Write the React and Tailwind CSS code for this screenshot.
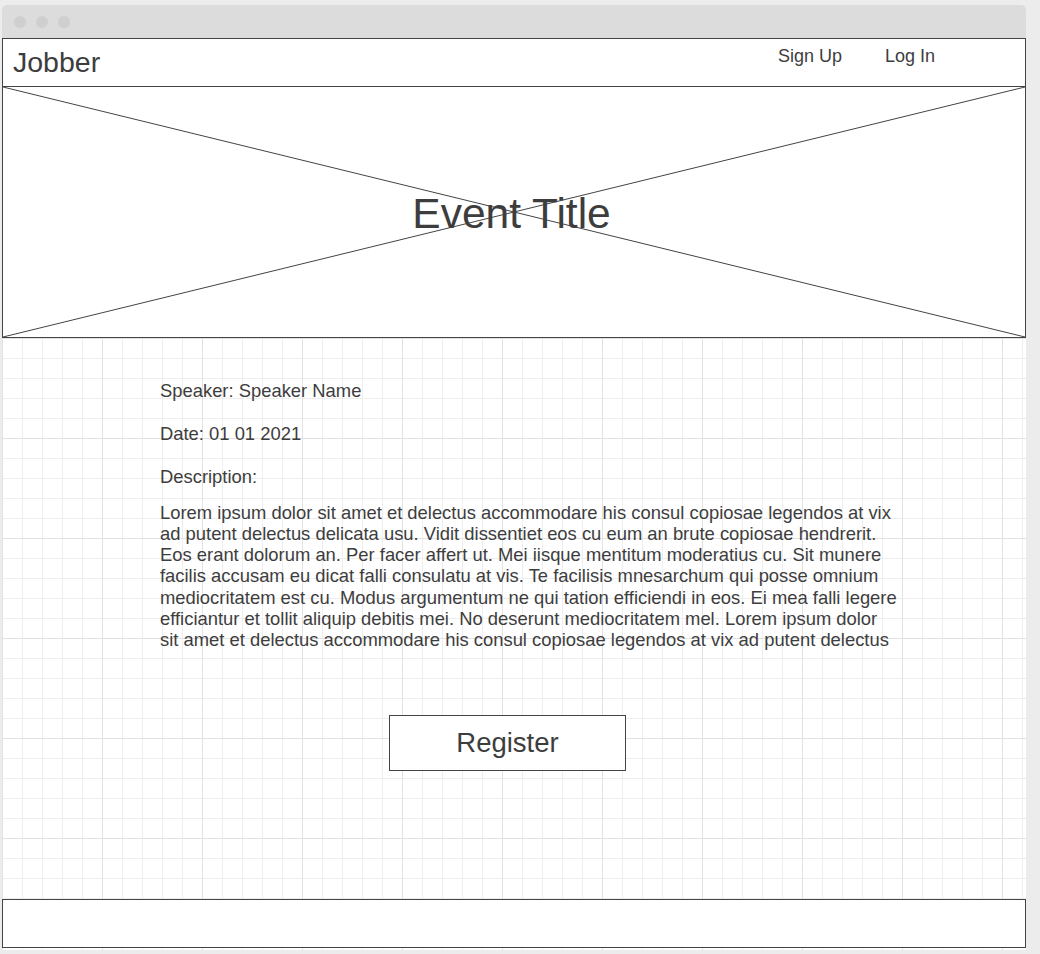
import React from "react";

const Dot = () => <span className="block w-3 h-3 rounded-full bg-[#cfcfcf]" />;

const lineas = [
  "Lorem ipsum dolor sit amet et delectus accommodare his consul copiosae legendos at vix",
  "ad putent delectus delicata usu. Vidit dissentiet eos cu eum an brute copiosae hendrerit.",
  "Eos erant dolorum an. Per facer affert ut. Mei iisque mentitum moderatius cu. Sit munere",
  "facilis accusam eu dicat falli consulatu at vis. Te facilisis mnesarchum qui posse omnium",
  "mediocritatem est cu. Modus argumentum ne qui tation efficiendi in eos. Ei mea falli legere",
  "efficiantur et tollit aliquip debitis mei. No deserunt mediocritatem mel. Lorem ipsum dolor",
  "sit amet et delectus accommodare his consul copiosae legendos at vix ad putent delectus",
];

const App = () => {
  return (
    <div className="min-h-screen bg-[#ececec] pt-[5px] pl-[2px] font-['Liberation_Sans',Arial,sans-serif] text-[#3d3d3d]">
      <div className="w-[1024px]">
        {/* barra de la ventana */}
        <div className="h-[33px] bg-[#dcdcdc] rounded-t-[5px] flex items-center gap-[10px] pl-3">
          <Dot />
          <Dot />
          <Dot />
        </div>

        {/* cuerpo con cuadricula */}
        <div className="h-[912px] pb-[2px] flex flex-col bg-white bg-[linear-gradient(to_right,#e2e2e2_1px,transparent_1px),linear-gradient(to_bottom,#e2e2e2_1px,transparent_1px),linear-gradient(to_right,#eeeeee_1px,transparent_1px),linear-gradient(to_bottom,#eeeeee_1px,transparent_1px)] bg-[size:100px_100px,100px_100px,20px_20px,20px_20px]">
          <header className="h-[49px] shrink-0 bg-white border border-[#444] flex items-start pt-[6px] pl-[10px] pr-[90px]">
            <span className="text-[28.5px] leading-[32px] pt-[1px]">Jobber</span>
            <nav className="ml-auto flex gap-[43px] text-[18px] leading-[22px]">
              <a href="#">Sign Up</a>
              <a href="#">Log In</a>
            </nav>
          </header>

          <div className="h-[251px] shrink-0 relative bg-white border-x border-b border-[#444] flex items-center justify-center">
            <svg
              className="absolute inset-0 w-full h-full"
              viewBox="0 0 100 100"
              preserveAspectRatio="none"
            >
              <line x1="0" y1="0" x2="100" y2="100" stroke="#444" strokeWidth="1" vectorEffect="non-scaling-stroke" />
              <line x1="100" y1="0" x2="0" y2="100" stroke="#444" strokeWidth="1" vectorEffect="non-scaling-stroke" />
            </svg>
            <h1 className="relative text-[42.5px] leading-[48px] pt-[3px] pr-[5px]">Event Title</h1>
          </div>

          <main className="flex-1 pl-[158px] pt-[42px] text-[18.4px] leading-[21.5px]">
            <p className="mb-[21px]">Speaker: Speaker Name</p>
            <p className="mb-[22px]">Date: 01 01 2021</p>
            <p className="mb-[14px]">Description:</p>
            <p className="leading-[21.3px] whitespace-nowrap">
              {lineas.map((l, i) => (
                <span key={i} className="block">
                  {l}
                </span>
              ))}
            </p>
            <button className="mt-[64px] ml-[229px] w-[237px] h-[56px] bg-white border border-[#444] text-[27.5px] leading-[32px]">
              Register
            </button>
          </main>

          <footer className="h-[49px] shrink-0 bg-white border border-[#444]" />
        </div>
      </div>
    </div>
  );
};

export default App;
